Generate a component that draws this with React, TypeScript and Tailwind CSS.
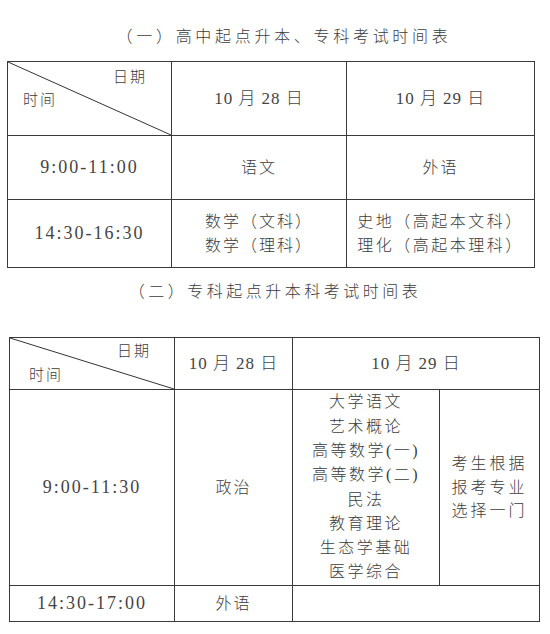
import * as React from 'react'

const font = { fontFamily: '"Liberation Serif", "Noto Sans CJK SC", serif' }

function Diagonal() {
    return (
        <svg className="absolute inset-0 w-full h-full" preserveAspectRatio="none" viewBox="0 0 100 100">
            <line x1="0" y1="0" x2="100" y2="100" stroke="#333" strokeWidth="1" vectorEffect="non-scaling-stroke" />
        </svg>
    )
}

const cell = 'border border-[#3a3a3a] text-center align-middle p-0'
const time = cell + ' text-[18px] tracking-[2px] text-[#444]'

export default function App() {
    return (
        <div className="w-[550px] h-[634px] bg-white text-[#3c3c3c] font-light" style={font}>
            {/* 表一 */}
            <div className="h-[61px] pt-[25px] text-[16px] leading-[24px] tracking-[3.7px] text-center pl-[18px]">
                （一）高中起点升本、专科考试时间表
            </div>
            <table className="ml-[7px] border-collapse table-fixed text-[16px]" style={{ width: 527 }}>
                <colgroup>
                    <col style={{ width: 164 }} />
                    <col style={{ width: 175 }} />
                    <col style={{ width: 188 }} />
                </colgroup>
                <tbody>
                    <tr className="h-[74px]">
                        <td className={cell + ' relative'}>
                            <Diagonal />
                            <div className="absolute left-[105px] top-[4px] text-[15px] tracking-[2px] leading-[22px]">日期</div>
                            <div className="absolute left-[15px] top-[27px] text-[15px] tracking-[2px] leading-[22px]">时间</div>
                        </td>
                        <td className={cell + ' tracking-[1px] text-[17px] text-[#444]'}>10 月 28 日</td>
                        <td className={cell + ' tracking-[1px] text-[17px] text-[#444]'}>10 月 29 日</td>
                    </tr>
                    <tr className="h-[64px]">
                        <td className={time}>9:00-11:00</td>
                        <td className={cell + ' tracking-[2px]'}>语文</td>
                        <td className={cell + ' tracking-[2px]'}>外语</td>
                    </tr>
                    <tr className="h-[68px]">
                        <td className={time}>14:30-16:30</td>
                        <td className={cell + ' tracking-[2px] leading-[24px]'}>
                            <div>数学（文科）</div>
                            <div>数学（理科）</div>
                        </td>
                        <td className={cell + ' tracking-[2.5px] leading-[24px]'}>
                            <div>史地（高起本文科）</div>
                            <div>理化（高起本理科）</div>
                        </td>
                    </tr>
                </tbody>
            </table>

            {/* 表二 */}
            <div className="mt-[12px] mb-[33px] text-[16px] leading-[24px] tracking-[3.5px] text-center">
                （二）专科起点升本科考试时间表
            </div>
            <table className="ml-[9px] border-collapse table-fixed text-[16px]" style={{ width: 530 }}>
                <colgroup>
                    <col style={{ width: 165 }} />
                    <col style={{ width: 118 }} />
                    <col style={{ width: 147 }} />
                    <col style={{ width: 100 }} />
                </colgroup>
                <tbody>
                    <tr className="h-[52px]">
                        <td className={cell + ' relative'}>
                            <Diagonal />
                            <div className="absolute left-[107px] top-[2px] text-[15px] tracking-[2px] leading-[22px]">日期</div>
                            <div className="absolute left-[19px] top-[26px] text-[15px] tracking-[2px] leading-[22px]">时间</div>
                        </td>
                        <td className={cell + ' tracking-[1px] text-[17px] text-[#444]'}>10 月 28 日</td>
                        <td className={cell + ' tracking-[1px] text-[17px] text-[#444]'} colSpan={2}>10 月 29 日</td>
                    </tr>
                    <tr className="h-[196px]">
                        <td className={time}>9:00-11:30</td>
                        <td className={cell + ' tracking-[2px]'}>政治</td>
                        <td className={cell + ' tracking-[2.5px] leading-[24.3px]'}>
                            <div>大学语文</div>
                            <div>艺术概论</div>
                            <div>高等数学(一)</div>
                            <div>高等数学(二)</div>
                            <div>民法</div>
                            <div>教育理论</div>
                            <div>生态学基础</div>
                            <div>医学综合</div>
                        </td>
                        <td className={cell + ' tracking-[3px] leading-[23.5px]'}>
                            <div>考生根据</div>
                            <div>报考专业</div>
                            <div>选择一门</div>
                        </td>
                    </tr>
                    <tr className="h-[36px]">
                        <td className={time}>14:30-17:00</td>
                        <td className={cell + ' tracking-[2px]'}>外语</td>
                        <td className={cell} colSpan={2}></td>
                    </tr>
                </tbody>
            </table>
        </div>
    )
}
